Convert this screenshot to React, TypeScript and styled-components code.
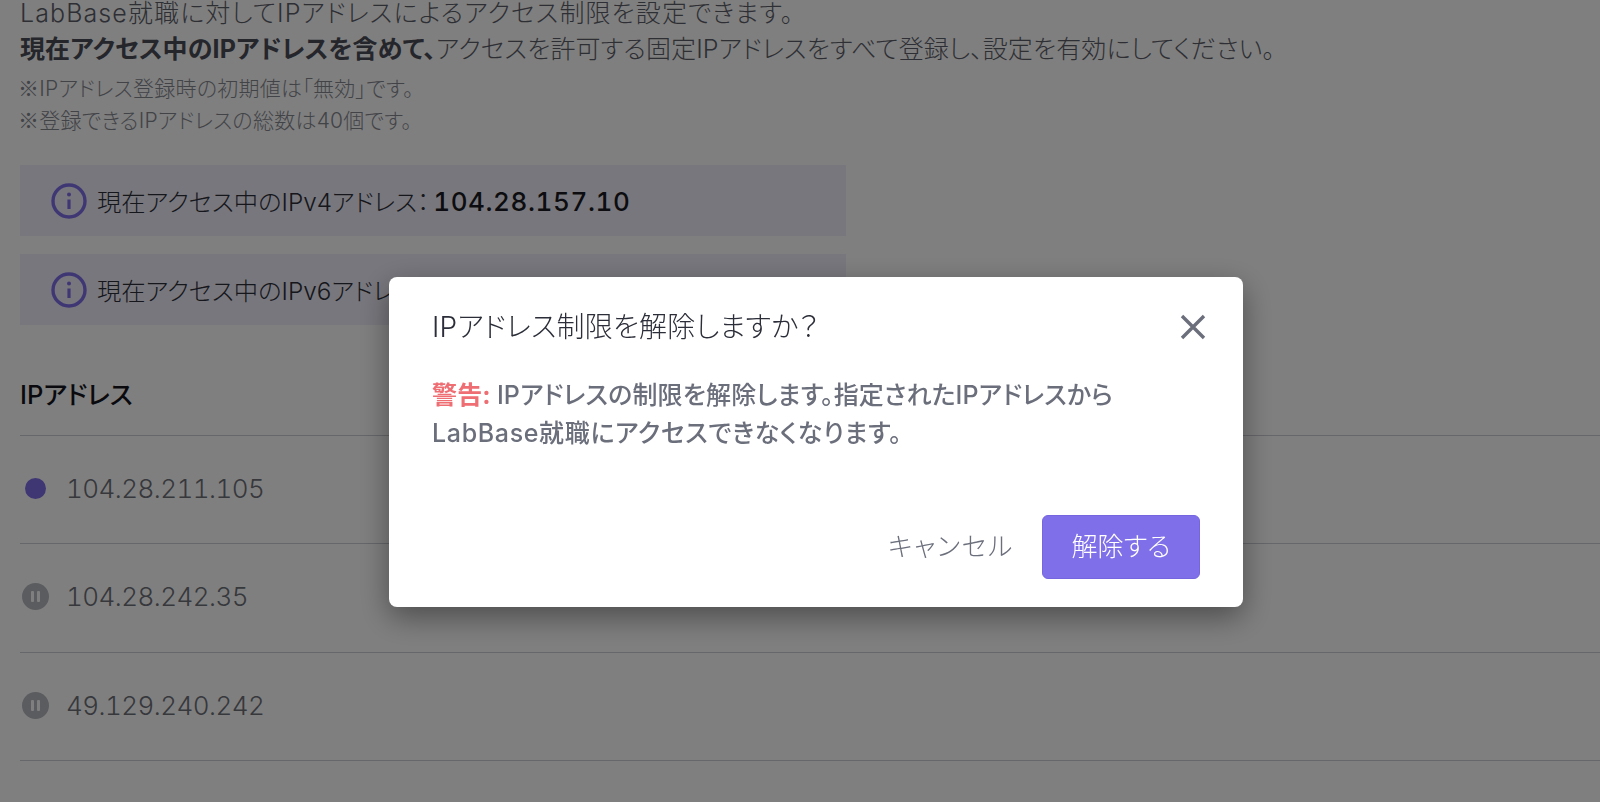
import React from "react";
import styled, { createGlobalStyle } from "styled-components";

const Global = createGlobalStyle`
  html, body { margin: 0; padding: 0; height: 802px; overflow: hidden; background: #fff; }
  body {
    font-family: Inter, "Noto Sans CJK JP", sans-serif;
    font-feature-settings: "palt";
    color: #2f3037;
  }
`;
const Page = styled.main`
  width: 1600px;
  height: 802px;
  padding: 0 0 0 20px;
  margin-top: -5px;
  box-sizing: border-box;
`;
const Lead = styled.p<{ $spacing?: number }>`
  margin: 0;
  font-size: 25px;
  line-height: 36px;
  color: #5c5e69;
  font-weight: 300;
  white-space: nowrap;
  letter-spacing: ${(p) => p.$spacing ?? 0}px;
`;
const Strong = styled.strong`
  font-weight: 700;
  color: #4a4c57;
`;
const Note = styled.p`
  margin: 0 0 0 -2px;
  font-size: 21px;
  line-height: 32px;
  color: #85878f;
  font-weight: 300;
  letter-spacing: 0.25px;
`;
const RefMark = styled.span`
  font-family: "Noto Sans CJK JP", sans-serif;
  font-feature-settings: normal;
  line-height: 0;
`;
const Notes = styled.div`
  margin-top: 6px;
`;
const InfoList = styled.div`
  margin-top: 28px;
  display: flex;
  flex-direction: column;
  gap: 18px;
  width: 826px;
`;
const InfoBox = styled.div`
  height: 71px;
  background: #f0effa;
  display: flex;
  align-items: center;
  gap: 10px;
  padding-left: 32px;
  font-size: 24.3px;
  font-weight: 300;
  color: #2d2f38;
  white-space: nowrap;
`;
const InfoIcon = styled.svg`
  width: 36px;
  height: 36px;
  flex: none;
  margin-left: -1px;
  color: #7f6fe8;
`;
const Addr = styled.b`
  font-weight: 500;
  font-size: 26px;
  color: #1a1b22;
  font-variant-numeric: tabular-nums;
  letter-spacing: 0.6px;
  margin-left: 4px;
`;
const Table = styled.section`
  margin-top: 42px;
  width: 1580px;
`;
const TableHead = styled.div`
  height: 69px;
  box-sizing: border-box;
  font-size: 25.5px;
  font-weight: 500;
  color: #14151c;
  line-height: 36px;
  padding-top: 10px;
  border-bottom: 1px solid #ccced4;
`;
const Row = styled.div`
  height: 108.3px;
  box-sizing: border-box;
  display: flex;
  align-items: center;
  gap: 16px;
  border-bottom: 1px solid #ccced4;
  font-size: 26px;
  font-weight: 300;
  font-variant-numeric: tabular-nums;
  letter-spacing: -0.55px;
  color: #6e7079;
  padding-bottom: 2px;
`;
const StatusSlot = styled.span`
  width: 30px;
  display: flex;
  justify-content: center;
  flex: none;
`;
const ActiveDot = styled.span`
  width: 21px;
  height: 21px;
  border-radius: 50%;
  background: #7f6fe8;
`;
const PausedDot = styled.span`
  width: 27px;
  height: 27px;
  border-radius: 50%;
  background: #b7b9c0;
  display: flex;
  align-items: center;
  justify-content: center;
  gap: 3px;
  &::before, &::after {
    content: "";
    width: 3px;
    height: 11px;
    background: #fff;
    border-radius: 1px;
  }
`;
const Overlay = styled.div`
  position: fixed;
  inset: 0;
  background: rgba(0, 0, 0, 0.5);
  padding: 277px 0 0 389px;
  box-sizing: border-box;
`;
const Modal = styled.div`
  width: 854px;
  height: 330px;
  box-sizing: border-box;
  background: #fff;
  border-radius: 8px;
  box-shadow: 0 10px 30px rgba(0, 0, 0, 0.4);
  padding: 30px 36px 28px 43px;
  display: flex;
  flex-direction: column;
`;
const ModalHead = styled.div`
  display: flex;
  align-items: center;
  justify-content: space-between;
  height: 40px;
`;
const Title = styled.h2`
  margin: -4px 0 0;
  font-size: 28px;
  font-weight: 300;
  letter-spacing: 0.25px;
  color: #2b2d38;
`;
const CloseIcon = styled.svg`
  width: 28px;
  height: 28px;
  color: #6b6e7b;
`;
const Warning = styled.p`
  margin: 29px 0 0;
  font-size: 25px;
  line-height: 38px;
  font-weight: 500;
  color: #6b6e7b;
  letter-spacing: 0.15px;
`;
const Danger = styled.span`
  color: #ee6e73;
  font-weight: 700;
`;
const WarningTail = styled.span`
  letter-spacing: 0.65px;
`;
const Actions = styled.div`
  margin-top: auto;
  display: flex;
  justify-content: flex-end;
  align-items: center;
  gap: 28px;
  padding-right: 7px;
`;
const Cancel = styled.button`
  border: 0;
  background: none;
  padding: 0 0 5px;
  font: inherit;
  font-feature-settings: inherit;
  font-size: 26px;
  font-weight: 300;
  letter-spacing: 1.6px;
  color: #6b6e7b;
`;
const Primary = styled.button`
  width: 158px;
  height: 64px;
  border: 1px solid #7566e0;
  border-radius: 6px;
  padding: 0 0 5px;
  background: #7f6fe8;
  color: #fff;
  font: inherit;
  font-feature-settings: inherit;
  font-size: 26px;
  font-weight: 300;
`;

const Info = () => (
  <InfoIcon viewBox="0 0 36 36" fill="none" stroke="currentColor">
    <circle cx="18" cy="18" r="16" strokeWidth="3.4" />
    <circle cx="18" cy="11.5" r="2" fill="currentColor" stroke="none" />
    <path d="M18 16.5v9.5" strokeWidth="3.2" />
  </InfoIcon>
);

export default function App() {
  return (
    <>
      <Global />
      <Page>
        <Lead $spacing={1.1}>LabBase就職に対してIPアドレスによるアクセス制限を設定できます。</Lead>
        <Lead $spacing={0.12}>
          <Strong>現在アクセス中のIPアドレスを含めて、</Strong>
          アクセスを許可する固定IPアドレスをすべて登録し、設定を有効にしてください。
        </Lead>
        <Notes>
          <Note><RefMark>※</RefMark>IPアドレス登録時の初期値は「無効」です。</Note>
          <Note><RefMark>※</RefMark>登録できるIPアドレスの総数は40個です。</Note>
        </Notes>
        <InfoList>
          <InfoBox>
            <Info />
            <span>
              現在アクセス中のIPv4アドレス：<Addr>104.28.157.10</Addr>
            </span>
          </InfoBox>
          <InfoBox>
            <Info />
            <span>現在アクセス中のIPv6アドレス：</span>
          </InfoBox>
        </InfoList>
        <Table>
          <TableHead>IPアドレス</TableHead>
          <Row>
            <StatusSlot><ActiveDot /></StatusSlot>104.28.211.105
          </Row>
          <Row>
            <StatusSlot><PausedDot /></StatusSlot>104.28.242.35
          </Row>
          <Row>
            <StatusSlot><PausedDot /></StatusSlot>49.129.240.242
          </Row>
        </Table>
      </Page>
      <Overlay>
        <Modal>
          <ModalHead>
            <Title>IPアドレス制限を解除しますか？</Title>
            <CloseIcon viewBox="0 0 28 28" fill="none" stroke="currentColor" strokeWidth="3.4">
              <path d="M3 3l22 22M25 3L3 25" />
            </CloseIcon>
          </ModalHead>
          <Warning>
            <Danger>警告: </Danger>IPアドレスの制限を解除します。指定されたIPアドレスから
            <br />
            <WarningTail>LabBase就職にアクセスできなくなります。</WarningTail>
          </Warning>
          <Actions>
            <Cancel>キャンセル</Cancel>
            <Primary>解除する</Primary>
          </Actions>
        </Modal>
      </Overlay>
    </>
  );
}
